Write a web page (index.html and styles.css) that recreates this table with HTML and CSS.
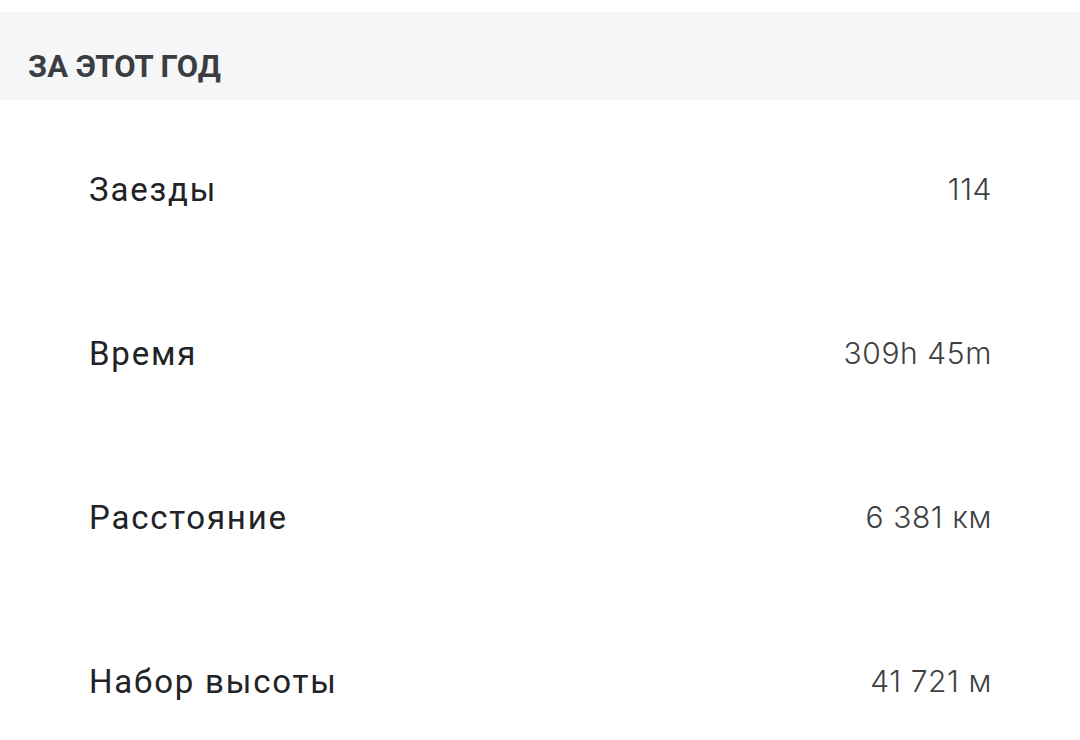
FILE: index.html
```html
<!DOCTYPE html>
<html lang="ru">
<head>
    <meta charset="UTF-8">
    <title>За этот год</title>
    <link rel="stylesheet" href="styles.css">
</head>
<body>
    <div class="section-head">
        <h2>ЗА ЭТОТ ГОД</h2>
    </div>

    <ul class="stats">
        <li class="stat-row">
            <span class="stat-label">Заезды</span>
            <span class="stat-value">114</span>
        </li>
        <li class="stat-row">
            <span class="stat-label">Время</span>
            <span class="stat-value">309h 45m</span>
        </li>
        <li class="stat-row">
            <span class="stat-label">Расстояние</span>
            <span class="stat-value">6 381 км</span>
        </li>
        <li class="stat-row">
            <span class="stat-label">Набор высоты</span>
            <span class="stat-value">41 721 м</span>
        </li>
    </ul>
</body>
</html>
```

FILE: styles.css
```css
body {
    margin: 0;
    padding: 12px 0 0;
    background-color: #fff;
    font-family: Roboto, "Liberation Sans", sans-serif;
}

.section-head {
    background-color: #f5f6f7;
    height: 88px;
    box-sizing: border-box;
    display: flex;
    align-items: center;
    padding: 20px 28px 0;
}

.section-head h2 {
    margin: 0;
    font-size: 31px;
    font-weight: 700;
    color: #3c3d42;
    letter-spacing: 0;
}

.stats {
    list-style: none;
    margin: 0;
    padding: 7px 0 0;
}

.stat-row {
    height: 164px;
    display: flex;
    justify-content: space-between;
    align-items: center;
    padding: 0 88px 0 89px;
}

.stat-label {
    font-size: 33px;
    color: #222326;
    letter-spacing: 1.8px;
}

.stat-value {
    font-family: Inter, "Noto Sans", sans-serif;
    font-size: 30px;
    font-weight: 300;
    color: #3e3f43;
    letter-spacing: 0.6px;
}
```
